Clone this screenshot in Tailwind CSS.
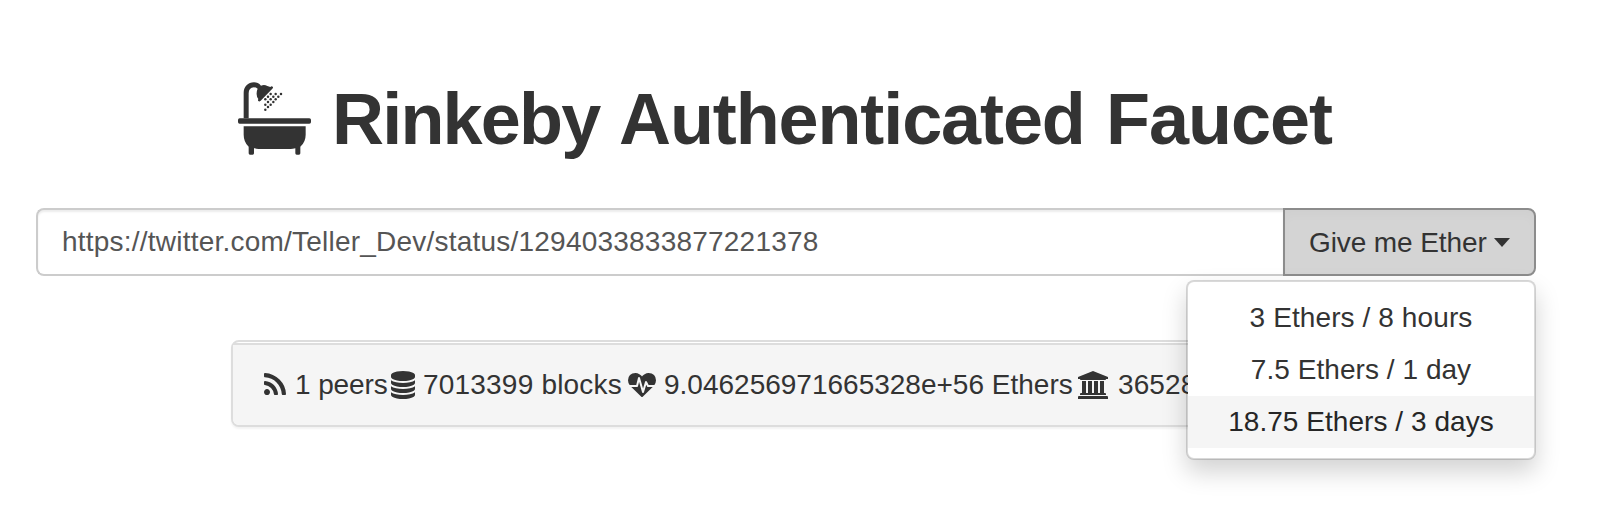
<!DOCTYPE html>
<html lang="en">
<head>
<meta charset="utf-8">
<title>Rinkeby Authenticated Faucet</title>
<script src="https://cdn.jsdelivr.net/npm/@tailwindcss/browser@4"></script>
</head>
<body class="h-[510px] overflow-hidden bg-white font-['Liberation_Sans',Arial,sans-serif] text-[28px] text-[#333] pt-[79px]">
<main class="ml-9 w-[1500px]">
  <h1 class="flex h-20 pl-[202px] text-[72px] leading-[80px] font-bold whitespace-nowrap">
    <svg class="mt-[3px] mr-[21px] h-[73px] w-[73px] shrink-0" viewBox="24 20 219 219" fill="#333">
      <rect x="24" y="129" width="219" height="16" rx="5"/>
      <path d="M41 153H227V178q0 22-16 36V234q0 4-4 4h-7q-4 0-4-4V219q-8 2-14 2H86q-7 0-14-3V234q0 4-4 4h-8q-4 0-4-4V214q-15-14-15-36z"/>
      <path d="M41 129V52C41 34 54 21 72 21q12 0 21 10q10-4 19 1l9 3q4-4 7-1q3 3-1 6L92 76q-4 4-7 1q-2-2 0-6q-6-8-5-18q0-8 3-13Q78 36 72 36Q56 37 56 54V129z"/>
      <g>
        <circle cx="122" cy="56" r="3.700"/><circle cx="137" cy="56" r="3.700"/><circle cx="153" cy="56" r="3.700"/>
        <circle cx="114" cy="64" r="3.700"/><circle cx="130" cy="64" r="3.700"/><circle cx="145" cy="64" r="3.700"/>
        <circle cx="106" cy="72" r="3.700"/><circle cx="122" cy="72" r="3.700"/><circle cx="137" cy="72" r="3.700"/>
        <circle cx="114" cy="80" r="3.700"/><circle cx="130" cy="80" r="3.700"/>
        <circle cx="106" cy="88" r="3.700"/><circle cx="122" cy="88" r="3.700"/>
        <circle cx="114" cy="95" r="3.700"/><circle cx="106" cy="103" r="3.700"/>
      </g>
    </svg>
    <span class="w-[287px] shrink-0 tracking-[-1.8px]">Rinkeby</span>
    <span class="w-[487px] shrink-0 tracking-[-1.1px]">Authenticated</span>
    <span class="tracking-[-1px]">Faucet</span>
  </h1>

  <div class="relative mt-[49px] flex h-[68px]">
    <div class="w-[1247px] rounded-l-lg border-2 border-r-0 border-[#ccc] pl-6 leading-[63px] tracking-[0.220px] text-[#555] shadow-[inset_0_2px_2px_rgba(0,0,0,0.075)]">https://twitter.com/Teller_Dev/status/1294033833877221378</div>
    <button class="flex w-[253px] items-center rounded-r-lg border-2 border-[#8c8c8c] bg-[#d4d4d4] pl-6 shadow-[inset_0_6px_10px_rgba(0,0,0,0.02)]">
      <span class="leading-[63px] tracking-[-0.1px]">Give me Ether</span>
      <svg class="ml-[7px] h-[9px] w-4" viewBox="0 0 16 9" fill="#333"><path d="M0 0H16L8 9z"/></svg>
    </button>
    <ul class="absolute top-[72px] right-0 z-10 w-[350px] rounded-lg border-2 border-black/15 bg-white bg-clip-padding py-[10px] text-center leading-10 shadow-[0_12px_24px_rgba(0,0,0,0.175)]">
      <li class="py-[6px] tracking-[0.1px]">3 Ethers / 8 hours</li>
      <li class="py-[6px] tracking-[0.05px]">7.5 Ethers / 1 day</li>
      <li class="bg-[#f5f5f5] py-[6px] tracking-[0.05px] text-[#262626]">18.75 Ethers / 3 days</li>
    </ul>
  </div>

  <div class="mt-16 ml-[195px] h-[87px] w-[1110px] rounded-lg border-2 border-[#ddd] bg-white pt-px shadow-[0_2px_2px_rgba(0,0,0,0.05)]">
    <div class="flex h-[82px] items-center overflow-hidden rounded-b-md border-t-2 border-[#ddd] bg-[#f5f5f5] pl-[31px] leading-[80px] whitespace-nowrap">
      <svg class="mt-[-2px] h-[22px] w-[22px] shrink-0" viewBox="192 128 1408 1408" fill="#333"><path d="M576 1344q0 80-56 136t-136 56-136-56-56-136 56-136 136-56 136 56 56 136zm512 123q2 28-17 48-18 21-47 21h-135q-25 0-43-16.5t-20-41.5q-22-229-184.5-391.5t-391.5-184.5q-25-2-41.5-20t-16.5-43v-135q0-29 21-47 17-17 43-17h5q160 13 306 80.5t259 181.5q114 113 181.5 259t80.5 306zm512 2q2 27-18 47-18 20-46 20h-143q-26 0-44.5-17.5t-19.5-42.5q-12-215-101-408.5t-231.5-336-336-231.5-408.5-102q-25-1-42.5-19.5t-17.5-43.5v-143q0-28 20-46 18-18 44-18h3q262 13 501.5 120t425.5 294q187 186 294 425.5t120 501.5z"/></svg>
      <span class="ml-[9px] w-24 shrink-0 tracking-[-0.1px]">1 peers</span>
      <svg class="h-7 w-6 shrink-0" viewBox="128 0 1536 1792" fill="#333"><path d="M896 768q237 0 443-43t325-127v170q0 69-103 128t-280 93.5-385 34.5-385-34.5-280-93.5-103-128v-170q119 84 325 127t443 43zm0 768q237 0 443-43t325-127v170q0 69-103 128t-280 93.5-385 34.5-385-34.5-280-93.5-103-128v-170q119 84 325 127t443 43zm0-384q237 0 443-43t325-127v170q0 69-103 128t-280 93.5-385 34.5-385-34.5-280-93.5-103-128v-170q119 84 325 127t443 43zm0-1152q208 0 385 34.5t280 93.5 103 128v128q0 69-103 128t-280 93.5-385 34.5-385-34.5-280-93.5-103-128v-128q0-69 103-128t280-93.5 385-34.5z"/></svg>
      <span class="ml-2 w-[205px] shrink-0 tracking-[0.2px]">7013399 blocks</span>
      <svg class="h-6 w-7 shrink-0" viewBox="0 128 1792 1536" fill="#333"><path d="M1280 1024h305q-5 6-10 10.500t-9 7.500l-3 4-623 600q-18 18-44 18t-44-18l-624-602q-5-2-21-20h369q22 0 39.500-13.500t22.500-34.500l70-281 190 667q6 20 23 33t39 13q21 0 38-13t23-33l146-485 56 112q18 35 57 35zm512-428q0 145-103 300h-369l-111-221q-8-17-25.500-27t-36.500-8q-45 5-56 46l-129 430-196-686q-6-20-23.500-33t-39.500-13-39 13.500-22 34.500l-116 464h-423q-103-155-103-300 0-220 127-344t351-124q62 0 126.500 21.500t120 58 95.500 68.500 76 68q36-36 76-68t95.500-68.500 120-58 126.500-21.500q224 0 351 124t127 344z"/></svg>
      <span class="ml-2 w-[414px] shrink-0">9.046256971665328e+56 Ethers</span>
      <svg class="h-7 w-[30px] shrink-0" viewBox="0 0 1920 1792" fill="#333"><path d="M960 0l960 384v128h-128q0 26-20.500 45t-48.500 19h-1526q-28 0-48.500-19t-20.500-45h-128v-128zM256 640h256v768h128v-768h256v768h128v-768h256v768h128v-768h256v768h59q28 0 48.500 19t20.500 45v64h-1664v-64q0-26 20.500-45t48.500-19h59zM1851 1600q28 0 48.500 19t20.500 45v128h-1920v-128q0-26 20.500-45t48.500-19h1782z"/></svg>
      <span class="ml-[10px] tracking-[0.1px]">36528</span>
    </div>
  </div>
</main>
</body>
</html>
